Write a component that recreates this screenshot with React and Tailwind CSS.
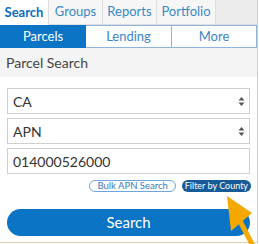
import { useState } from "react";

const font = { fontFamily: "Lato, 'Noto Sans', sans-serif" };

function UpDown() {
  return (
    <svg width="7" height="11" viewBox="0 0 7 11" className="shrink-0">
      <path d="M3.5 1 L6.5 4.5 L0.5 4.5 Z" fill="#555" />
      <path d="M3.5 10 L6.5 6.5 L0.5 6.5 Z" fill="#555" />
    </svg>
  );
}

function SelectBox({ value }) {
  return (
    <div className="h-[26px] border border-[#cfcfcf] bg-white flex items-center justify-between pl-[5px] pr-[4px]">
      <span className="text-[14px] text-[#333]">{value}</span>
      <UpDown />
    </div>
  );
}

export default function App() {
  const [tab] = useState("Search");
  const tabs = [
    ["Search", "w-[49px]"],
    ["Groups", "w-[54px]"],
    ["Reports", "w-[54px]"],
    ["Portfolio", "w-[59px]"],
  ];

  return (
    <div
      className="relative w-[259px] h-[244px] bg-white overflow-hidden"
      style={font}
    >
      <div className="w-[258px] h-[243px] border-r border-b border-[#d8ceb0] flex flex-col">
        {/* ===== TOP TABS ===== */}
        <div className="flex h-[25px] bg-[#ececec]">
          {tabs.map(([name, w]) => (
            <div
              key={name}
              className={`${w} flex items-center justify-center border-r border-[#dedede] text-[13px] ${
                tab === name
                  ? "bg-white text-[#0b6dbf] font-bold"
                  : "bg-[#f6f6f6] text-[#3a88c9] border-b"
              }`}
            >
              {name}
            </div>
          ))}
          <div className="flex-1 border-b border-[#dedede]" />
        </div>

        {/* ===== SUB TABS ===== */}
        <div className="flex h-[23px] bg-white">
          <div className="w-[86px] bg-[#0b74c4] text-white text-[13px] flex items-center justify-center">
            Parcels
          </div>
          <div className="w-[86px] border border-l-0 border-[#8fb4dc] text-[#3a86c8] text-[13px] flex items-center justify-center">
            Lending
          </div>
          <div className="flex-1 border border-l-0 border-[#8fb4dc] text-[#3a86c8] text-[13px] flex items-center justify-center">
            More
          </div>
        </div>

        {/* ===== HEADING ===== */}
        <div className="h-[29px] bg-[#f4f4f4] flex items-center pl-[6px] text-[14px] text-[#444]">
          Parcel Search
        </div>

        {/* ===== FORM ===== */}
        <div className="px-[7px] pt-[11px] flex flex-col gap-[4px]">
          <SelectBox value="CA" />
          <SelectBox value="APN" />
          <div className="h-[26px] border border-[#cfcfcf] bg-white flex items-center pl-[5px] text-[14px] text-[#333]">
            014000526000
          </div>
          <div className="flex justify-end gap-[6px] mt-[2px] -mr-[1px]">
            <button className="h-[12px] px-[7px] rounded-full border border-[#6ea6da] text-[#3a78b8] text-[9.5px] leading-[10px] flex items-center">
              Bulk APN Search
            </button>
            <button className="h-[12px] px-[3px] rounded-full bg-[#175a98] text-white text-[9px] leading-[10px] flex items-center">
              Filter by County
            </button>
          </div>
          <button className="mt-[13px] h-[27px] rounded-full bg-[#0b74c4] text-white text-[15px] flex items-center justify-center">
            Search
          </button>
        </div>
      </div>

      {/* ===== ARROW ===== */}
      <svg
        className="absolute left-0 top-0 pointer-events-none"
        width="259"
        height="244"
        viewBox="0 0 259 244"
      >
        <line x1="240" y1="221" x2="254" y2="248" stroke="#f5a800" strokeWidth="5" />
        <polygon points="227,196 231,231 252,213" fill="#f5a800" />
      </svg>
    </div>
  );
}
